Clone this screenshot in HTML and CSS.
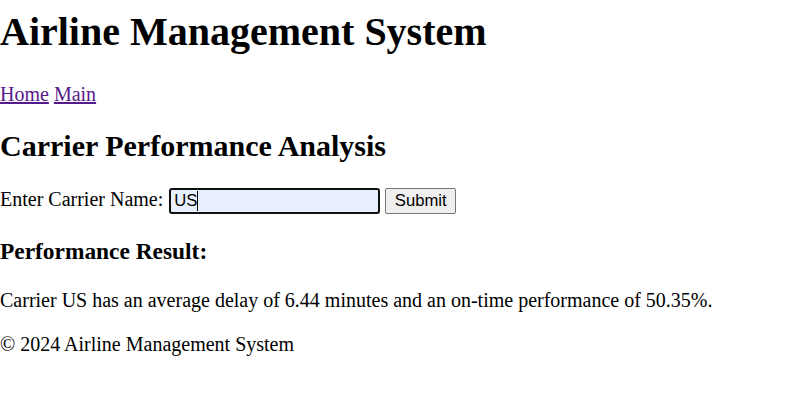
FILE: index.html
```html
<!DOCTYPE html>
<html lang="en">
<head>
<meta charset="utf-8">
<title>Airline Management System</title>
<link rel="stylesheet" href="styles.css">
</head>
<body>
<header class="site-header">
  <h1 class="site-title">Airline Management System</h1>
  <nav class="site-nav"><a href="#home">Home</a> <a href="#main">Main</a></nav>
</header>
<main class="content">
  <h2 class="page-title">Carrier Performance Analysis</h2>
  <form class="carrier-form" action="#">
    <label for="carrier">Enter Carrier Name:</label> <span class="field"><input class="text-input" id="carrier" type="text" name="carrier" value="US"><span class="caret"></span></span> <button class="submit-btn" type="button">Submit</button>
  </form>
  <h3 class="result-title">Performance Result:</h3>
  <p class="result-text">Carrier US has an average delay of 6.44 minutes and an on-time performance of 50.35%.</p>
</main>
<footer class="site-footer">
  <p class="footer-text">&copy; 2024 Airline Management System</p>
</footer>
</body>
</html>
```

FILE: styles.css
```css
html, body {
  margin: 0;
  padding: 0;
  background: #ffffff;
}

body {
  font-family: "Liberation Serif", "Times New Roman", serif;
  font-size: 20px;
  line-height: 23px;
  color: #000000;
}

.site-title {
  font-size: 40px;
  line-height: 46px;
  font-weight: bold;
  margin: 9px 0 28px 0;
}

.site-nav {
  display: block;
  margin: 0 0 23px 0;
}

.site-nav a {
  color: #551a8b;
  text-decoration: underline;
}

.page-title {
  font-size: 30px;
  line-height: 34px;
  font-weight: bold;
  margin: 0 0 25px 0;
}

.carrier-form {
  margin: 0;
}

.field {
  position: relative;
  display: inline-block;
  margin-left: 1px;
}

.text-input {
  box-sizing: border-box;
  width: 211px;
  height: 26px;
  padding: 1px 2px 1px 3px;
  margin: 0;
  border: 2px solid #101010;
  border-radius: 3px;
  background: #e8f0fe;
  font-family: "Liberation Sans", Arial, sans-serif;
  font-size: 16.67px;
  color: #000000;
  outline: none;
  vertical-align: baseline;
}

.caret {
  position: absolute;
  left: 28px;
  top: 3px;
  width: 1px;
  height: 20px;
  background: #000000;
}

.submit-btn {
  box-sizing: border-box;
  width: 71px;
  height: 26px;
  padding: 1px 6px;
  margin: 0;
  border: 1px solid #767676;
  border-radius: 2px;
  background: #efefef;
  font-family: "Liberation Sans", Arial, sans-serif;
  font-size: 16.67px;
  color: #000000;
}

.result-title {
  font-size: 23.4px;
  line-height: 27px;
  font-weight: bold;
  margin: 24px 0 24px 0;
}

.result-text {
  margin: 0 0 21px 0;
}

.site-footer {
  margin: 0;
}

.footer-text {
  margin: 0;
}
```
